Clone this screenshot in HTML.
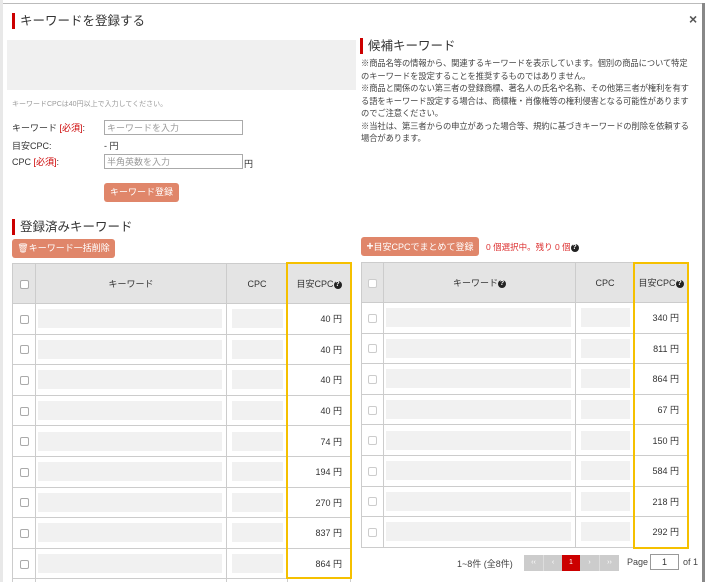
<!DOCTYPE html>
<html style="overflow:hidden"><head><meta charset="utf-8"><style>
*{box-sizing:border-box;margin:0;padding:0}
html,body{width:705px;height:582px;overflow:hidden}
body{background:#fff;font-family:"Liberation Sans","Noto Sans CJK JP",sans-serif;color:#333;position:relative}
.a{position:absolute}
.h{font-size:12.5px;color:#333;border-left:3px solid #c00;padding-left:5px;line-height:16px}
.btn{background:#e0866a;color:#fff;border-radius:3px;font-size:9px;text-align:center;line-height:19px;white-space:nowrap}
table{border-collapse:collapse;table-layout:fixed;position:absolute;font-size:9px}
td,th{border:1px solid #ccc;text-align:center;padding:0}
th{background:#e4e4e4;font-weight:normal;height:40px}
td{height:30.6px}
.cb{display:inline-block;width:9px;height:9px;border:1px solid #aaa;border-radius:2px;background:#fff;vertical-align:middle}
.ph{background:#f1f1f1;height:19px;margin:0 4px 0 2px}
.ph2{background:#f1f1f1;height:19px;margin:0 4px 0 5px}
.v{text-align:right;padding-right:8px}
.q{display:inline-block;width:8px;height:8px;border-radius:50%;background:#222;color:#fff;font-size:7px;line-height:8px;text-align:center;font-weight:bold;vertical-align:1px}
.yb{position:absolute;border:2px solid #f5c000}
.lbl{font-size:9px;color:#333}
.red{color:#c00}
input{position:absolute;border:1px solid #aaa;height:15px;font-size:9px;color:#999;padding-left:2px;font-family:inherit;background:#fff}
.pg{position:absolute;top:555px;height:16px;background:#ccc;color:#fff;font-size:7px;line-height:16px;text-align:center}
</style></head><body>
<div class="a" style="left:0;top:0;width:3px;height:582px;background:#e8e8e8"></div>
<div class="a" style="left:3px;top:3px;width:700px;height:1px;background:#bbb"></div>
<div class="a" style="left:702px;top:3px;width:3px;height:579px;background:#888"></div>
<div class="a" style="left:689px;top:11px;font-size:14px;font-weight:bold;color:#555">×</div>

<div class="a h" style="left:12px;top:13px">キーワードを登録する</div>
<div class="a" style="left:7px;top:40px;width:349px;height:50px;background:#f0f0f0"></div>
<div class="a" style="left:12px;top:99px;font-size:7px;color:#999">キーワードCPCは40円以上で入力してください。</div>
<div class="a lbl" style="left:12px;top:121px">キーワード <span class="red">[必須]</span>:</div>
<input class="a" style="left:104px;top:120px;width:139px" value="キーワードを入力">
<div class="a lbl" style="left:12px;top:139px">目安CPC:</div>
<div class="a lbl" style="left:104px;top:139px">- 円</div>
<div class="a lbl" style="left:12px;top:155px">CPC <span class="red">[必須]</span>:</div>
<input class="a" style="left:104px;top:154px;width:139px" value="半角英数を入力">
<div class="a lbl" style="left:244px;top:157px">円</div>
<div class="a btn" style="left:104px;top:183px;width:75px;height:19px">キーワード登録</div>

<div class="a h" style="left:12px;top:219px">登録済みキーワード</div>
<div class="a btn" style="left:12px;top:239px;width:103px;height:19px">&#128465;キーワード一括削除</div>

<table style="left:12px;top:263px;width:338px">
<colgroup><col style="width:23px"><col style="width:191px"><col style="width:61px"><col style="width:63px"></colgroup>
<tr><th><span class="cb"></span></th><th>キーワード</th><th>CPC</th><th>目安CPC<span class="q">?</span></th></tr>
<tr><td><span class="cb"></span></td><td><div class="ph"></div></td><td><div class="ph2"></div></td><td class="v">40 円</td></tr>
<tr><td><span class="cb"></span></td><td><div class="ph"></div></td><td><div class="ph2"></div></td><td class="v">40 円</td></tr>
<tr><td><span class="cb"></span></td><td><div class="ph"></div></td><td><div class="ph2"></div></td><td class="v">40 円</td></tr>
<tr><td><span class="cb"></span></td><td><div class="ph"></div></td><td><div class="ph2"></div></td><td class="v">40 円</td></tr>
<tr><td><span class="cb"></span></td><td><div class="ph"></div></td><td><div class="ph2"></div></td><td class="v">74 円</td></tr>
<tr><td><span class="cb"></span></td><td><div class="ph"></div></td><td><div class="ph2"></div></td><td class="v">194 円</td></tr>
<tr><td><span class="cb"></span></td><td><div class="ph"></div></td><td><div class="ph2"></div></td><td class="v">270 円</td></tr>
<tr><td><span class="cb"></span></td><td><div class="ph"></div></td><td><div class="ph2"></div></td><td class="v">837 円</td></tr>
<tr><td><span class="cb"></span></td><td><div class="ph"></div></td><td><div class="ph2"></div></td><td class="v">864 円</td></tr>
<tr><td></td><td></td><td></td><td></td></tr>
</table>
<div class="yb" style="left:286px;top:262px;width:66px;height:317px"></div>

<div class="a h" style="left:360px;top:38px">候補キーワード</div>
<div class="a" style="left:361px;top:57px;width:330px;font-size:8.3px;line-height:12.5px;color:#444;letter-spacing:-0.1px">※商品名等の情報から、関連するキーワードを表示しています。個別の商品について特定のキーワードを設定することを推奨するものではありません。<br>※商品と関係のない第三者の登録商標、著名人の氏名や名称、その他第三者が権利を有する語をキーワード設定する場合は、商標権・肖像権等の権利侵害となる可能性がありますのでご注意ください。<br>※当社は、第三者からの申立があった場合等、規約に基づきキーワードの削除を依頼する場合があります。</div>
<div class="a btn" style="left:361px;top:237px;width:118px;height:19px"><b style="font-size:12px">+</b>目安CPCでまとめて登録</div>
<div class="a" style="left:486px;top:241px;font-size:8.5px;color:#d33">0 個選択中。残り 0 個<span class="q">?</span></div>

<table style="left:361px;top:262px;width:326px">
<colgroup><col style="width:22px"><col style="width:192px"><col style="width:59px"><col style="width:53px"></colgroup>
<tr><th><span class="cb" style="border-color:#ccc"></span></th><th>キーワード<span class="q">?</span></th><th>CPC</th><th>目安CPC<span class="q">?</span></th></tr>
<tr><td><span class="cb" style="border-color:#ccc"></span></td><td><div class="ph"></div></td><td><div class="ph2"></div></td><td class="v">340 円</td></tr>
<tr><td><span class="cb" style="border-color:#ccc"></span></td><td><div class="ph"></div></td><td><div class="ph2"></div></td><td class="v">811 円</td></tr>
<tr><td><span class="cb" style="border-color:#ccc"></span></td><td><div class="ph"></div></td><td><div class="ph2"></div></td><td class="v">864 円</td></tr>
<tr><td><span class="cb" style="border-color:#ccc"></span></td><td><div class="ph"></div></td><td><div class="ph2"></div></td><td class="v">67 円</td></tr>
<tr><td><span class="cb" style="border-color:#ccc"></span></td><td><div class="ph"></div></td><td><div class="ph2"></div></td><td class="v">150 円</td></tr>
<tr><td><span class="cb" style="border-color:#ccc"></span></td><td><div class="ph"></div></td><td><div class="ph2"></div></td><td class="v">584 円</td></tr>
<tr><td><span class="cb" style="border-color:#ccc"></span></td><td><div class="ph"></div></td><td><div class="ph2"></div></td><td class="v">218 円</td></tr>
<tr><td><span class="cb" style="border-color:#ccc"></span></td><td><div class="ph"></div></td><td><div class="ph2"></div></td><td class="v">292 円</td></tr>
</table>
<div class="yb" style="left:633px;top:262px;width:56px;height:287px"></div>

<div class="a" style="left:457px;top:557px;font-size:9px;color:#444">1~8件 (全8件)</div>
<div class="pg" style="left:524px;width:19px">‹‹</div>
<div class="pg" style="left:543px;width:19px;border-left:1px solid #ddd">‹</div>
<div class="pg" style="left:562px;width:18px;background:#c00">1</div>
<div class="pg" style="left:580px;width:19px">›</div>
<div class="pg" style="left:599px;width:20px;border-left:1px solid #ddd">››</div>
<div class="a" style="left:627px;top:557px;font-size:9px;color:#444">Page</div>
<div class="a" style="left:650px;top:554px;width:29px;height:16px;border:1px solid #999;font-size:9px;line-height:14px;text-align:center">1</div>
<div class="a" style="left:683px;top:557px;font-size:9px;color:#444">of 1</div>
</body></html>
